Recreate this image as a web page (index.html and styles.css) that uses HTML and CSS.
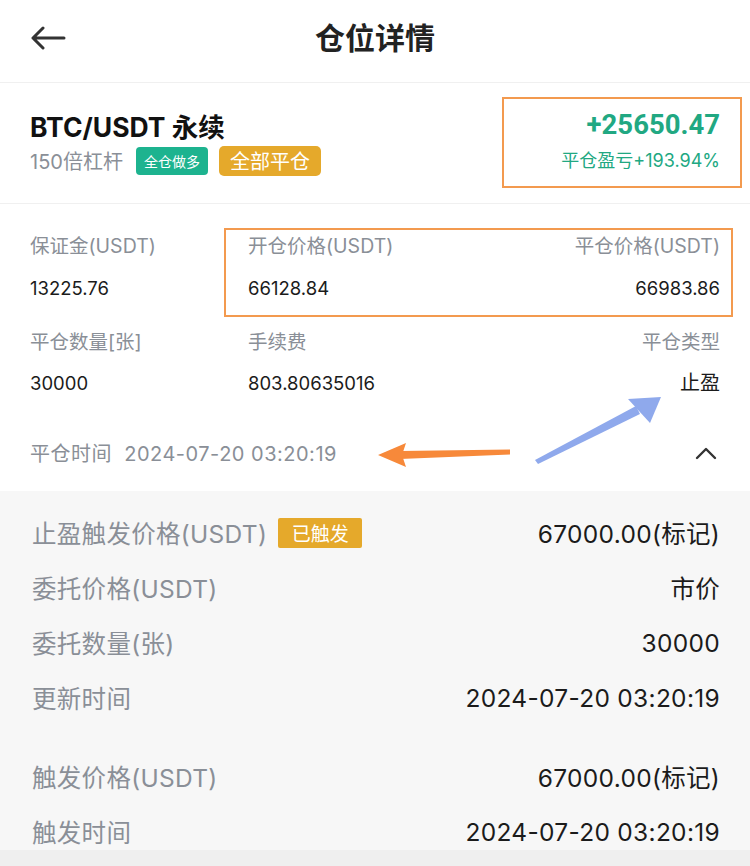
FILE: index.html
```html
<!DOCTYPE html>
<html lang="zh-CN">
<head>
<meta charset="utf-8">
<title>仓位详情</title>
<link rel="stylesheet" href="styles.css">
</head>
<body>
<div class="page">
  <header class="topbar">
    <svg class="back" viewBox="0 0 36 24" width="36" height="24"><path d="M34 12H3M13 2L3 12l10 10" fill="none" stroke="#333" stroke-width="3" stroke-linecap="round" stroke-linejoin="round"/></svg>
    <div class="title">仓位详情</div>
  </header>

  <section class="summary">
    <div class="sum-left">
      <div class="pair">BTC/USDT 永续</div>
      <div class="sub">
        <span class="lev">150倍杠杆</span>
        <span class="tag tag-green">全仓做多</span>
        <span class="tag tag-yellow">全部平仓</span>
      </div>
    </div>
    <div class="pnl-box">
      <div class="pnl">+25650.47</div>
      <div class="pnl-sub">平仓盈亏+193.94%</div>
    </div>
  </section>

  <section class="info">
    <div class="row1">
      <div class="cell c1">
        <div class="lbl">保证金(USDT)</div>
        <div class="val">13225.76</div>
      </div>
      <div class="hl-box">
        <div class="cell">
          <div class="lbl">开仓价格(USDT)</div>
          <div class="val">66128.84</div>
        </div>
        <div class="cell right">
          <div class="lbl">平仓价格(USDT)</div>
          <div class="val">66983.86</div>
        </div>
      </div>
    </div>
    <div class="row2">
      <div class="cell c1">
        <div class="lbl">平仓数量[张]</div>
        <div class="val">30000</div>
      </div>
      <div class="cell c2">
        <div class="lbl">手续费</div>
        <div class="val">803.80635016</div>
      </div>
      <div class="cell right c3">
        <div class="lbl">平仓类型</div>
        <div class="val cjk">止盈</div>
      </div>
    </div>
    <div class="time-row">
      <span class="time">平仓时间&nbsp;&nbsp;2024-07-20 03:20:19</span>
      <svg class="chev" viewBox="0 0 22 14" width="22" height="14"><path d="M2 12L11 3l9 9" fill="none" stroke="#333" stroke-width="2.4" stroke-linecap="round" stroke-linejoin="round"/></svg>
    </div>
  </section>

  <section class="detail">
    <div class="drow"><span class="dl">止盈触发价格(USDT)<span class="badge">已触发</span></span><span class="dv">67000.00(标记)</span></div>
    <div class="drow"><span class="dl">委托价格(USDT)</span><span class="dv">市价</span></div>
    <div class="drow"><span class="dl">委托数量(张)</span><span class="dv">30000</span></div>
    <div class="drow"><span class="dl">更新时间</span><span class="dv">2024-07-20 03:20:19</span></div>
    <div class="drow gap"><span class="dl">触发价格(USDT)</span><span class="dv">67000.00(标记)</span></div>
    <div class="drow"><span class="dl">触发时间</span><span class="dv">2024-07-20 03:20:19</span></div>
  </section>
  <div class="bottom-strip"></div>

  <svg class="arrows" viewBox="0 0 750 866" width="750" height="866">
    <path d="M510 449.5 L400 451 L400 459 L510 454.5 Z" fill="#f7893a"/>
    <path d="M378 455 L406 443 L402 455 L406 467 Z" fill="#f7893a"/>
    <path d="M535 460 L538 464 L640 414 L636 406 Z" fill="#8fa9ec"/>
    <path d="M661 397 L628 399 L650 423 Z" fill="#8fa9ec"/>
  </svg>
</div>
</body>
</html>
```
FILE: styles.css
```css
* { box-sizing: border-box; }
html, body { margin: 0; padding: 0; background: #fff; }
body {
  font-family: Inter, "Noto Sans CJK SC", sans-serif;
  color: #1b1b1b;
}
.page {
  position: relative;
  width: 750px;
  height: 866px;
  overflow: hidden;
  background: #fff;
}
.topbar {
  position: relative;
  height: 83px;
  border-bottom: 1px solid #f0f0f0;
  display: flex;
  align-items: center;
  justify-content: center;
}
.back {
  position: absolute;
  left: 30px;
  top: 26px;
}
.title {
  font-size: 30px;
  font-weight: 700;
  color: #222;
  margin-top: -10px;
}
.summary {
  height: 121px;
  border-bottom: 1px solid #f0f0f0;
  padding: 0 8px 0 30px;
  display: flex;
  align-items: center;
  justify-content: space-between;
}
.pair {
  font-size: 26.5px;
  font-weight: 700;
  line-height: 32px;
  color: #111;
}
.sub {
  display: flex;
  align-items: center;
  margin-top: 3px;
}
.lev {
  font-size: 20px;
  color: #8a8f97;
  margin-right: 13px;
}
.tag {
  color: #fff;
  border-radius: 4px;
  display: inline-flex;
  align-items: center;
  justify-content: center;
}
.tag-green {
  background: #1db38f;
  font-size: 14px;
  height: 28px;
  width: 72px;
  margin-right: 11px;
}
.tag-yellow {
  background: #e5a92b;
  font-size: 20px;
  height: 30px;
  width: 102px;
  border-radius: 5px;
}
.pnl-box {
  width: 240px;
  height: 91px;
  border: 2px solid #f39a4f;
  padding: 9px 20px 0 0;
  text-align: right;
  margin-top: -2px;
}
.pnl {
  font-family: Roboto, "Noto Sans CJK SC", sans-serif;
  font-size: 27.5px;
  font-weight: 700;
  color: #21a882;
  line-height: 34px;
}
.pnl-sub {
  font-size: 18px;
  color: #21a882;
  margin-top: 4px;
}
.info {
  padding: 24px 30px 0 30px;
  height: 287px;
}
.lbl {
  font-size: 19.5px;
  line-height: 28px;
  color: #8a8f97;
}
.val {
  font-size: 18.5px;
  line-height: 28px;
  color: #1b1b1b;
  margin-top: 14px;
}
.val.cjk { font-size: 20px; }
.right { text-align: right; }
.row1 {
  display: flex;
}
.c1 { width: 194px; }
.row1 .c1 { padding-top: 3px; }
.hl-box {
  flex: 1;
  margin-right: -13px;
  border: 2px solid #f39a4f;
  padding: 1px 11px 13px 22px;
  display: flex;
  justify-content: space-between;
}
.row1 .lbl { margin-top: 1px; }
.row2 {
  display: flex;
  margin-top: 11px;
}
.row2 .val { margin-top: 13px; }
.c2 { padding-left: 24px; }
.c3 { margin-left: auto; }
.time-row {
  margin-top: 41px;
  display: flex;
  align-items: center;
  justify-content: space-between;
}
.time {
  font-size: 20px;
  letter-spacing: 0.5px;
  color: #8a8f97;
}
.chev { margin-right: 3px; }
.detail {
  background: #f7f7f7;
  padding: 14px 30px 0 32px;
  height: 359px;
}
.drow {
  height: 55px;
  display: flex;
  align-items: center;
  justify-content: space-between;
  font-size: 24.5px;
  letter-spacing: 0.3px;
}
.drow.gap { margin-top: 24px; }
.dl {
  color: #8a8f97;
  display: flex;
  align-items: center;
}
.dv { color: #1b1b1b; }
.badge {
  background: #e5a92b;
  color: #fff;
  font-size: 19px;
  letter-spacing: 0;
  height: 30px;
  width: 84px;
  margin-left: 11px;
  border-radius: 2px;
  display: inline-flex;
  align-items: center;
  justify-content: center;
}
.bottom-strip {
  height: 17px;
  background: #efefef;
}
.arrows {
  position: absolute;
  left: 0;
  top: 0;
  pointer-events: none;
}
```
